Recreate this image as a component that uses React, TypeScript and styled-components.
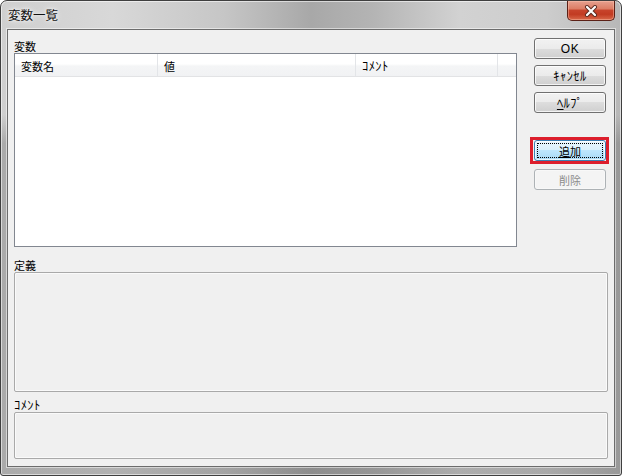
import React from "react";
import styled, { createGlobalStyle } from "styled-components";

const GlobalStyle = createGlobalStyle`
  html, body { margin: 0; padding: 0; background: #ffffff; }
  body { font-family: "Noto Sans CJK JP", "Liberation Sans", sans-serif; }
  * { box-sizing: border-box; }
`;

const FONT = `"Noto Sans CJK JP", "Liberation Sans", sans-serif`;

const Window = styled.div`
  width: 622px;
  height: 476px;
  border: 1px solid #3f3f3f;
  border-radius: 7px 7px 3px 3px;
  padding: 0 6px 8px 6px;
  display: flex;
  flex-direction: column;
  background:
    linear-gradient(180deg, rgba(0,0,0,0) 0%, rgba(0,0,0,0) 24%, rgba(60,60,60,0.25) 30%, rgba(60,60,60,0.25) 100%),
    linear-gradient(90deg, #cfcfcf 0%, #d8d8d8 18%, #c6c6c6 36%, #a8a8a8 50%, #b4b4b4 60%, #d2d2d2 74%, #cdcdcd 88%, #b7b7b7 100%);
  box-shadow: inset 0 0 0 1px rgba(255,255,255,0.55);
`;

const TitleBar = styled.div`
  height: 28px;
  display: flex;
  align-items: flex-start;
  justify-content: space-between;
`;

const Title = styled.div`
  font-family: ${FONT};
  font-size: 12.5px;
  line-height: 14px;
  color: #111;
  padding: 7px 0 0 1px;
  text-shadow: 0 0 6px rgba(255,255,255,0.95), 0 0 3px rgba(255,255,255,0.9);
`;

const CloseButton = styled.div`
  width: 48px;
  height: 20px;
  border: 1px solid #5b2016;
  border-top: none;
  border-radius: 0 0 5px 5px;
  background: linear-gradient(180deg, #e6a08f 0%, #dc7e66 40%, #c7432b 50%, #c23b22 70%, #d8684a 100%);
  box-shadow: inset 0 0 0 1px rgba(255,200,180,0.45);
  display: flex;
  align-items: center;
  justify-content: center;
`;

const Client = styled.div`
  flex: 1;
  border: 1px solid #6c6c6c;
  box-shadow: 0 0 0 1px rgba(255,255,255,0.5);
  background: #f0f0f0;
  padding: 8px 6px 7px 6px;
  display: flex;
  flex-direction: column;
`;

const TopRow = styled.div`
  display: flex;
  align-items: flex-start;
  gap: 17px;
`;

const ListSection = styled.div`
  width: 503px;
  display: flex;
  flex-direction: column;
`;

const Label = styled.div<{ $top: number }>`
  font-family: ${FONT};
  font-size: 11px;
  line-height: 14px;
  height: 14px;
  color: #000;
  margin-top: ${(p) => p.$top}px;
`;

const HalfWidth = styled.span`
  font-size: 12.5px;
  letter-spacing: 0.4px;
`;

const ListView = styled.div`
  height: 194px;
  border: 1px solid #828790;
  background: #ffffff;
`;

const Header = styled.div`
  display: flex;
  height: 23px;
  border-bottom: 1px solid #e2e3e5;
  background: linear-gradient(180deg, #ffffff 0%, #ffffff 45%, #f4f5f6 55%, #f1f2f4 100%);
`;

const HeaderCell = styled.div<{ $w?: number }>`
  ${(p) => (p.$w ? `width: ${p.$w}px;` : "flex: 1;")}
  border-right: ${(p) => (p.$w ? "1px solid #e3e5e8" : "none")};
  font-family: ${FONT};
  font-size: 11px;
  line-height: 14px;
  padding: 5px 0 0 6px;
  color: #000;
  white-space: nowrap;
`;

const ButtonColumn = styled.div`
  width: 72px;
  display: flex;
  flex-direction: column;
`;

const Button = styled.div<{ $top: number; $variant?: "default" | "disabled" }>`
  position: relative;
  height: 21px;
  margin-top: ${(p) => p.$top}px;
  border: 1px solid ${(p) => (p.$variant === "default" ? "#3c7fb1" : p.$variant === "disabled" ? "#adb2b5" : "#707070")};
  border-radius: 3px;
  background: ${(p) =>
    p.$variant === "default"
      ? "linear-gradient(180deg, #eaf6fd 0%, #d9f0fc 50%, #bee6fd 50%, #a7d9f5 100%)"
      : p.$variant === "disabled"
      ? "#f4f4f4"
      : "linear-gradient(180deg, #f2f2f2 0%, #ebebeb 50%, #dddddd 50%, #cfcfcf 100%)"};
  box-shadow: inset 0 0 0 1px ${(p) => (p.$variant === "disabled" ? "rgba(255,255,255,0.4)" : "rgba(255,255,255,0.75)")};
  color: ${(p) => (p.$variant === "disabled" ? "#8b8b8b" : "#000")};
  font-family: ${FONT};
  font-size: 11px;
  line-height: 14px;
  display: flex;
  align-items: center;
  justify-content: center;
`;

const OkText = styled.span`
  font-family: "Liberation Sans", sans-serif;
  font-size: 12px;
  letter-spacing: 0.5px;
`;

const FocusRing = styled.div`
  position: absolute;
  inset: 2px;
  border: 1px dotted #000;
  pointer-events: none;
`;

const Highlight = styled.div`
  position: absolute;
  top: -4px;
  bottom: -4px;
  left: -5px;
  right: -4px;
  border: 3px solid #dc1e2c;
  pointer-events: none;
`;

const Mnemonic = styled.span`
  text-decoration: underline;
  text-underline-offset: 1px;
`;

const TextBox = styled.div<{ $h: number }>`
  height: ${(p) => p.$h}px;
  border: 1px solid #a9a9a9;
  border-radius: 2px;
  background: #f0f0f0;
  box-shadow: inset 0 0 0 1px #fafafa;
`;

export default function App() {
  return (
    <>
      <GlobalStyle />
      <Window>
        <TitleBar>
          <Title>変数一覧</Title>
          <CloseButton>
            <svg width="14" height="12" viewBox="0 0 14 12">
              <path d="M3 2 L11 10 M11 2 L3 10" stroke="#5a2a20" strokeWidth="4" strokeLinecap="round" />
              <path d="M3 2 L11 10 M11 2 L3 10" stroke="#ffffff" strokeWidth="2.2" strokeLinecap="round" />
            </svg>
          </CloseButton>
        </TitleBar>
        <Client>
          <TopRow>
            <ListSection>
              <Label $top={1}>変数</Label>
              <ListView>
                <Header>
                  <HeaderCell $w={143}>変数名</HeaderCell>
                  <HeaderCell $w={198}>値</HeaderCell>
                  <HeaderCell $w={142}><HalfWidth>ｺﾒﾝﾄ</HalfWidth></HeaderCell>
                  <HeaderCell />
                </Header>
              </ListView>
            </ListSection>
            <ButtonColumn>
              <Button $top={0}><OkText>OK</OkText></Button>
              <Button $top={6}><HalfWidth>ｷｬﾝｾﾙ</HalfWidth></Button>
              <Button $top={6}>
                <HalfWidth><Mnemonic>ﾍ</Mnemonic>ﾙﾌﾟ</HalfWidth>
              </Button>
              <Button $top={27} $variant="default">
                <span><Mnemonic>追</Mnemonic>加</span>
                <FocusRing />
                <Highlight />
              </Button>
              <Button $top={8} $variant="disabled">削除</Button>
            </ButtonColumn>
          </TopRow>
          <Label $top={11}>定義</Label>
          <TextBox $h={120} />
          <Label $top={6}><HalfWidth>ｺﾒﾝﾄ</HalfWidth></Label>
          <TextBox $h={47} />
        </Client>
      </Window>
    </>
  );
}
